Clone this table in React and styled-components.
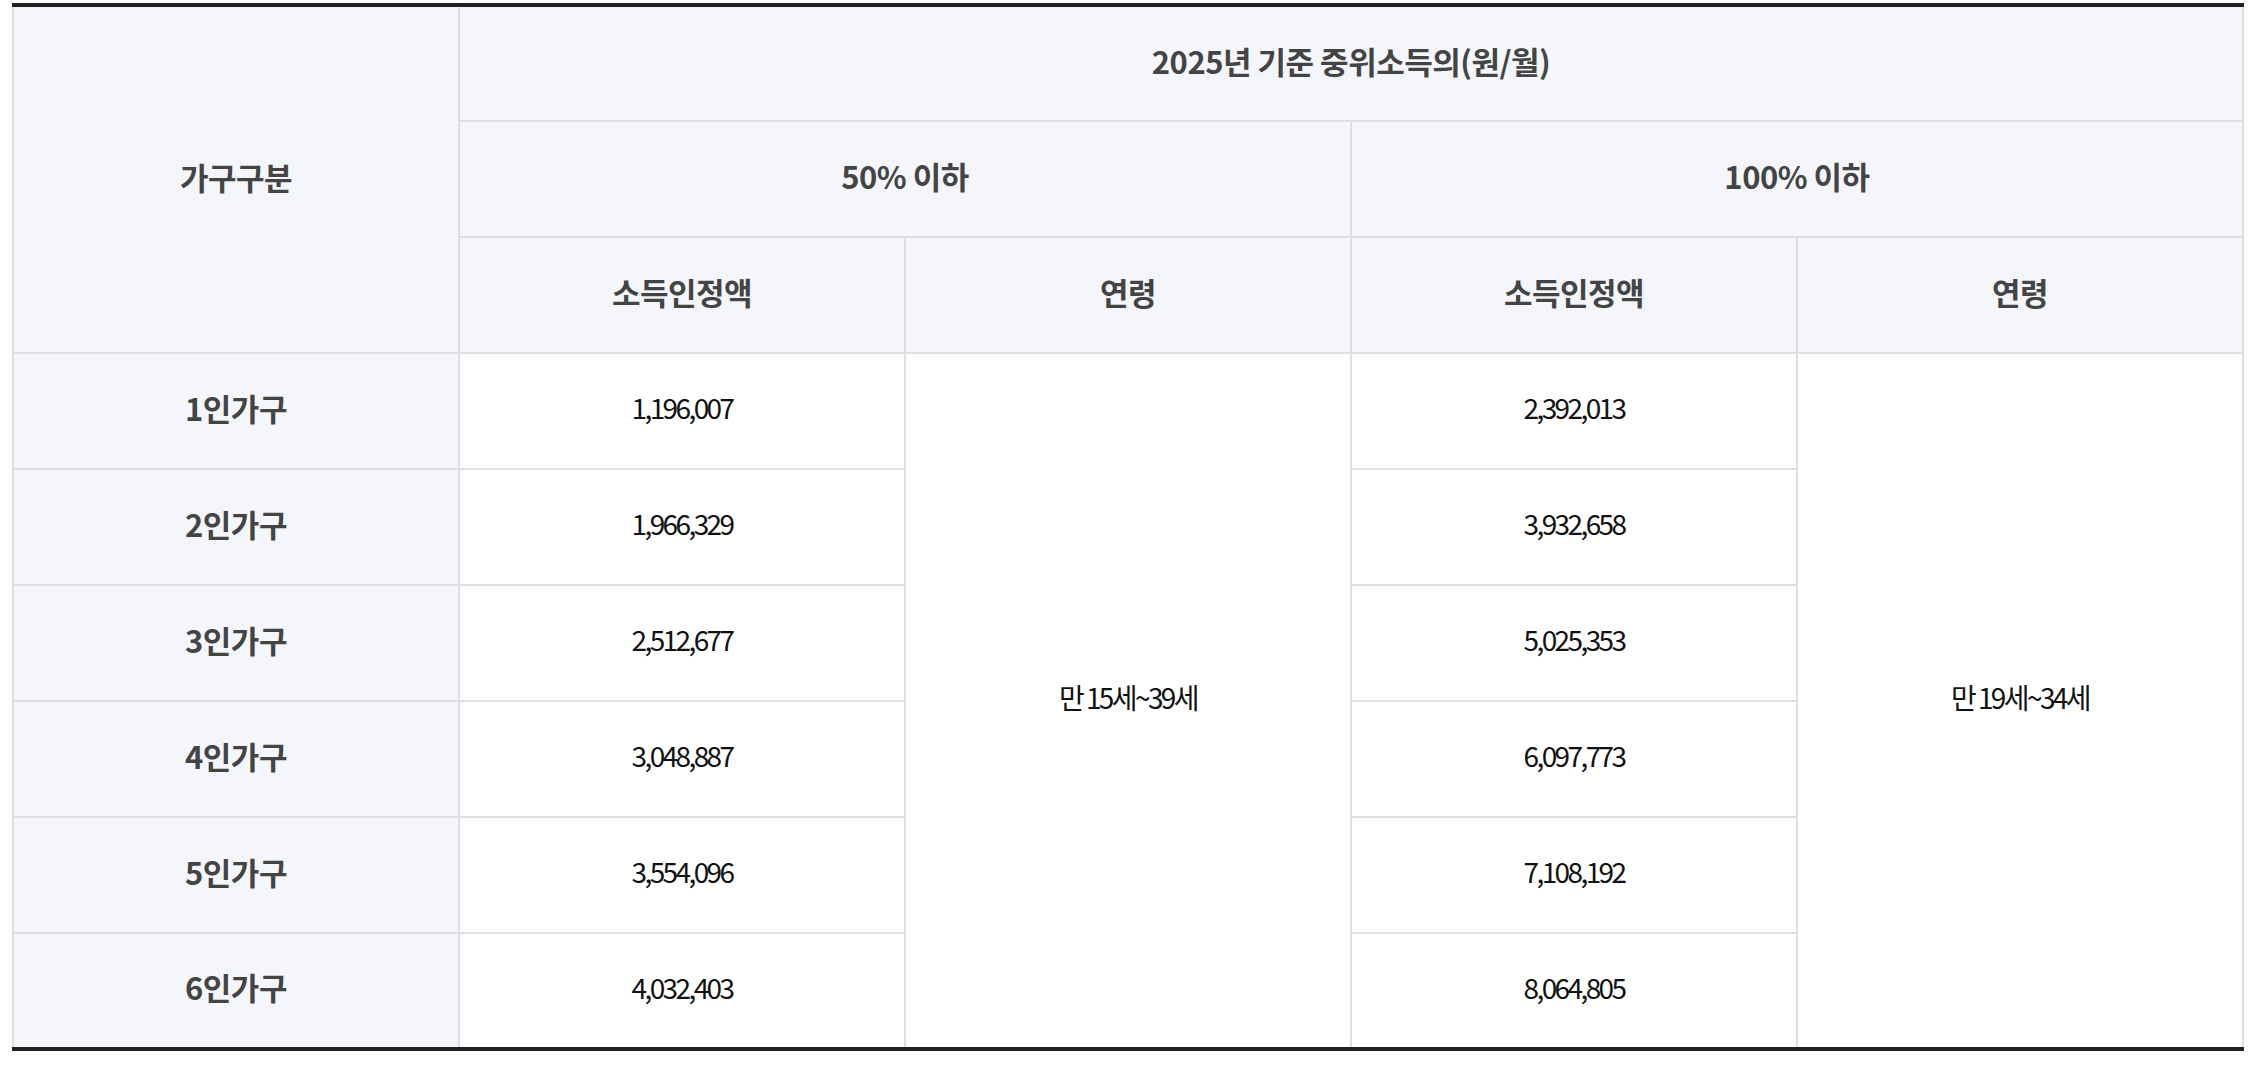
import React from "react";
import styled, { createGlobalStyle } from "styled-components";

const GlobalStyle = createGlobalStyle`
  body {
    margin: 0;
    background: #ffffff;
    font-family: "Noto Sans CJK KR", "Noto Sans", sans-serif;
  }
`;

const Wrapper = styled.div`
  padding: 3px 4px 0 12px;
`;

const Table = styled.table`
  width: 2232px;
  border-collapse: collapse;
  table-layout: fixed;
  border-top: 4px solid #222222;
  border-bottom: 4px solid #222222;
`;

const HeadCell = styled.th`
  box-sizing: border-box;
  height: 116px;
  padding: 0 0 7px;
  background: #f5f6fb;
  border: 2px solid #dedfe2;
  border-top: ${(p) => (p.$first ? "none" : "2px solid #dedfe2")};
  color: #444444;
  font-size: 31px;
  font-weight: 700;
  letter-spacing: -0.5px;
  text-align: center;
  vertical-align: middle;
`;

const RowHead = styled.th`
  box-sizing: border-box;
  height: 116px;
  padding: 0 0 8px;
  background: #f5f6fb;
  border: 2px solid #dedfe2;
  color: #444444;
  font-size: 31px;
  font-weight: 700;
  letter-spacing: -0.5px;
  text-align: center;
`;

const Cell = styled.td`
  box-sizing: border-box;
  height: 116px;
  padding: 0 0 8px;
  background: #ffffff;
  border: 2px solid #dedfe2;
  border-bottom: ${(p) => (p.$last ? "none" : "2px solid #dedfe2")};
  color: #111111;
  font-size: 28px;
  font-weight: 400;
  letter-spacing: -2.6px;
  text-align: center;
  vertical-align: middle;
`;

const rows = [
  { label: "1인가구", half: "1,196,007", full: "2,392,013" },
  { label: "2인가구", half: "1,966,329", full: "3,932,658" },
  { label: "3인가구", half: "2,512,677", full: "5,025,353" },
  { label: "4인가구", half: "3,048,887", full: "6,097,773" },
  { label: "5인가구", half: "3,554,096", full: "7,108,192" },
  { label: "6인가구", half: "4,032,403", full: "8,064,805" },
];

const App = () => {
  return (
    <Wrapper>
      <GlobalStyle />
      <Table>
        <thead>
          <tr>
            <HeadCell rowSpan={3} $first>
              가구구분
            </HeadCell>
            <HeadCell colSpan={4} $first>
              2025년 기준 중위소득의(원/월)
            </HeadCell>
          </tr>
          <tr>
            <HeadCell colSpan={2}>50% 이하</HeadCell>
            <HeadCell colSpan={2}>100% 이하</HeadCell>
          </tr>
          <tr>
            <HeadCell>소득인정액</HeadCell>
            <HeadCell>연령</HeadCell>
            <HeadCell>소득인정액</HeadCell>
            <HeadCell>연령</HeadCell>
          </tr>
        </thead>
        <tbody>
          {rows.map((row, i) => (
            <tr key={row.label}>
              <RowHead>{row.label}</RowHead>
              <Cell $last={i === rows.length - 1}>{row.half}</Cell>
              {i === 0 && (
                <Cell rowSpan={rows.length} $last>
                  만 15세~39세
                </Cell>
              )}
              <Cell $last={i === rows.length - 1}>{row.full}</Cell>
              {i === 0 && (
                <Cell rowSpan={rows.length} $last>
                  만 19세~34세
                </Cell>
              )}
            </tr>
          ))}
        </tbody>
      </Table>
    </Wrapper>
  );
};

export default App;
